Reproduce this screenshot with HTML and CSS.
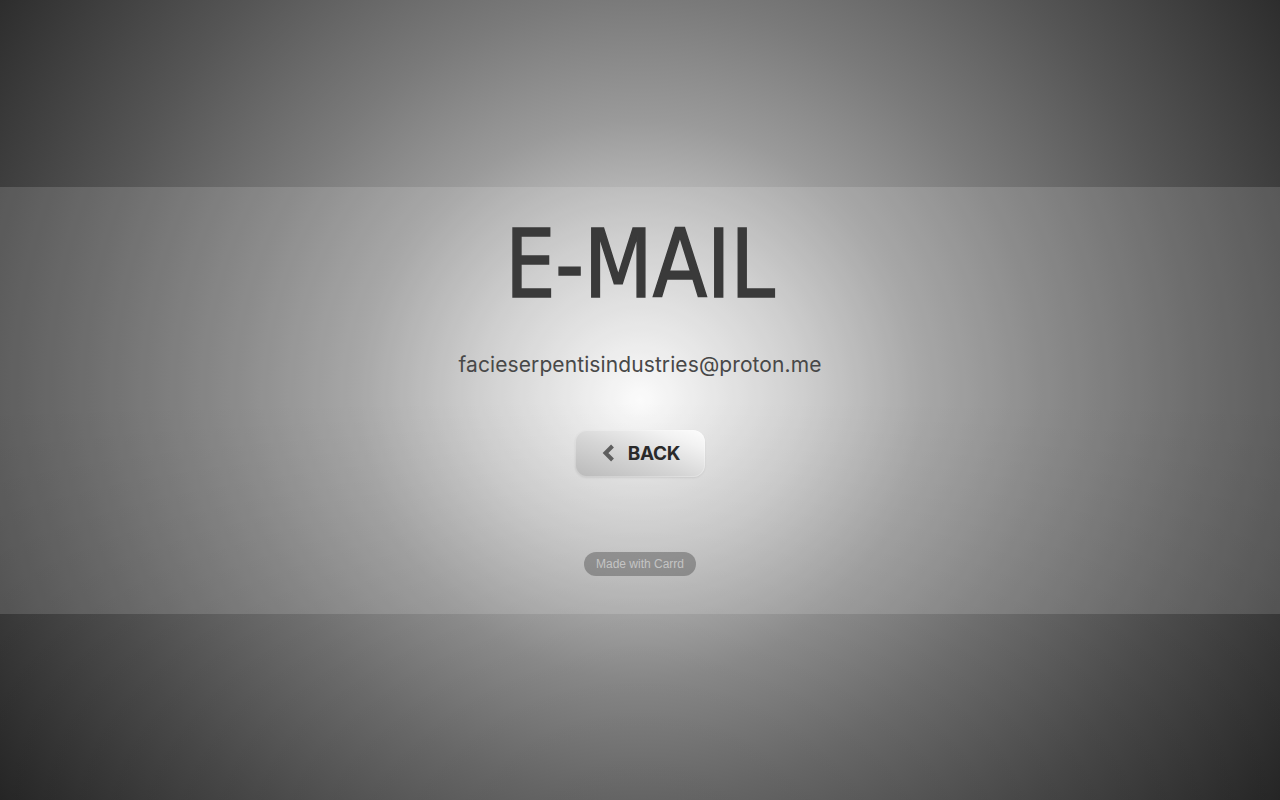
FILE: index.html
```html
<!DOCTYPE html>
<html lang="en">
<head>
<meta charset="utf-8">
<title>E-MAIL</title>
<link rel="stylesheet" href="styles.css">
</head>
<body>
<div class="page">
  <main class="band">
    <h1 class="title">E-MAIL</h1>
    <p class="email">facieserpentisindustries@proton.me</p>
    <a class="back" href="#">
      <svg class="chev" width="14" height="18" viewBox="0 0 14 18" aria-hidden="true">
        <path d="M11.5 2 L4.5 9 L11.5 16" fill="none" stroke="#5e5e5e" stroke-width="4"/>
      </svg>
      <span>BACK</span>
    </a>
    <a class="carrd" href="#">Made with Carrd</a>
  </main>
</div>
</body>
</html>
```

FILE: styles.css
```css
html, body {
  margin: 0;
  padding: 0;
  height: 100%;
}
body {
  background:
    linear-gradient(to bottom, rgba(0,0,0,0) 0%, rgba(0,0,0,0) 50%, rgba(0,0,0,0.18) 100%),
    radial-gradient(circle at 640px 400px, #fbfbfb 0px, #c8c8c8 160px, #9a9a9a 280px, #7a7a7a 400px, #555555 560px, #2c2c2c 760px);
  background-color: #333;
  font-family: "Inter", "Liberation Sans", sans-serif;
}
.page {
  height: 800px;
  display: flex;
  flex-direction: column;
  justify-content: center;
}
.band {
  height: 427px;
  background: rgba(255,255,255,0.14);
  display: flex;
  flex-direction: column;
  align-items: center;
  box-sizing: border-box;
  padding-top: 20px;
}
.title {
  margin: 0;
  display: inline-block;
  font-family: "DejaVu Sans Condensed", "DejaVu Sans", sans-serif;
  font-weight: 400;
  font-size: 95px;
  line-height: 115px;
  color: #3a3a3a;
  -webkit-text-stroke: 1.6px #3a3a3a;
  transform: scaleX(0.93);
}
.email {
  margin: 29px 0 0;
  font-size: 21px;
  line-height: 28px;
  color: #484848;
  letter-spacing: 0.1px;
}
.back {
  margin-top: 51px;
  width: 130px;
  height: 47px;
  box-sizing: border-box;
  border-radius: 12px;
  display: flex;
  align-items: center;
  justify-content: center;
  gap: 13px;
  padding-left: 1px;
  text-decoration: none;
  color: #2a2a2a;
  font-weight: 700;
  font-size: 19px;
  letter-spacing: -0.3px;
  background: linear-gradient(20deg, #b9b9b9 0%, #d6d6d6 45%, #f2f2f2 80%, #fdfdfd 100%);
  box-shadow: 0 1px 2px rgba(0,0,0,0.08), inset 0 0 0 1px rgba(255,255,255,0.25);
}
.chev {
  display: block;
}
.carrd {
  margin-top: 75px;
  height: 24px;
  padding: 0 12px;
  border-radius: 12px;
  display: flex;
  align-items: center;
  font-family: "Liberation Sans", Arial, sans-serif;
  font-size: 12px;
  color: #c4c4c4;
  background: rgba(80,80,80,0.45);
  text-decoration: none;
}
```
